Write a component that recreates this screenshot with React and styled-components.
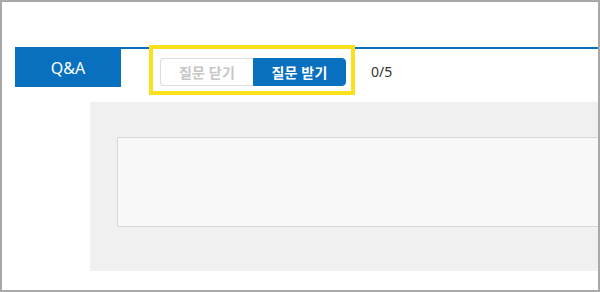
import styled, { createGlobalStyle } from "styled-components";

const GlobalStyle = createGlobalStyle`
  html, body {
    margin: 0;
    padding: 0;
    background: #ffffff;
  }
  body {
    font-family: "Noto Sans CJK KR", "Noto Sans", sans-serif;
  }
`;

const Frame = styled.div`
  position: relative;
  box-sizing: border-box;
  width: 600px;
  height: 292px;
  border: 2px solid #a9a9a9;
  overflow: hidden;
  padding-top: 45px;
`;

const TabBar = styled.div`
  display: flex;
  align-items: center;
  margin-left: 13px;
  border-top: 2px solid #0870be;
  height: 38px;
`;

const Tab = styled.div`
  align-self: stretch;
  width: 106px;
  display: flex;
  align-items: center;
  justify-content: center;
  background: #0870be;
  color: #ffffff;
  font-size: 16px;
  font-family: "Noto Sans", sans-serif;
`;

const Toggle = styled.div`
  display: flex;
  margin-left: 39px;
  margin-top: 7px;
  height: 28px;
`;

const ToggleButton = styled.button`
  box-sizing: border-box;
  width: 93px;
  height: 28px;
  padding: 0;
  font-family: inherit;
  font-size: 14px;
  font-weight: 700;
  letter-spacing: 0.3px;
  border: 1px solid ${(p) => (p.active ? "#0870be" : "#dcdcdc")};
  background: ${(p) => (p.active ? "#0870be" : "#ffffff")};
  color: ${(p) => (p.active ? "#ffffff" : "#c6c6c6")};
  border-radius: ${(p) => (p.active ? "0 4px 4px 0" : "4px 0 0 4px")};
  border-right: ${(p) => (p.active ? "1px solid #0870be" : "none")};
`;

const Count = styled.span`
  margin-left: 25px;
  margin-top: 6px;
  font-size: 14px;
  color: #333333;
  font-family: "Noto Sans", sans-serif;
`;

const Highlight = styled.div`
  position: absolute;
  left: 147px;
  top: 43px;
  width: 206px;
  height: 50px;
  box-sizing: border-box;
  border: 4px solid #fbe01e;
  pointer-events: none;
`;

const Panel = styled.div`
  margin-top: 15px;
  margin-left: 88px;
  height: 169px;
  box-sizing: border-box;
  background: #f0f0f0;
  padding: 35px 0 0 27px;
`;

const InputBox = styled.div`
  height: 90px;
  box-sizing: border-box;
  background: #f8f8f8;
  border: 1px solid #d8d8d8;
  border-right: none;
  border-radius: 2px 0 0 2px;
`;

export default function App() {
  return (
    <>
      <GlobalStyle />
      <Frame>
        <TabBar>
          <Tab>Q&amp;A</Tab>
          <Toggle>
            <ToggleButton>질문 닫기</ToggleButton>
            <ToggleButton active>질문 받기</ToggleButton>
          </Toggle>
          <Count>0/5</Count>
        </TabBar>
        <Highlight />
        <Panel>
          <InputBox />
        </Panel>
      </Frame>
    </>
  );
}
